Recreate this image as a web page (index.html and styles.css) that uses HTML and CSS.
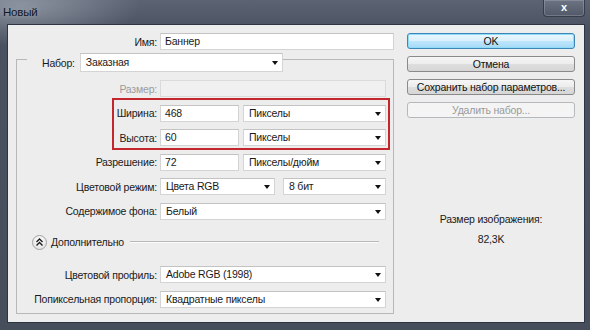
FILE: index.html
```html
<!DOCTYPE html>
<html lang="ru">
<head>
    <meta charset="UTF-8">
    <title>Новый</title>
    <link rel="stylesheet" href="styles.css">
</head>
<body>

    <div class="window">
        <div class="titlebar">
            <span class="title">Новый</span>
            <div class="close">x</div>
        </div>

        <div class="client">
            <div class="form">
                <div class="row name-row">
                    <span class="lbl">Имя:</span>
                    <div class="field input name-input">Баннер</div>
                </div>

                <fieldset class="preset">
                    <legend>
                        <span>Набор:</span>
                        <div class="field select preset-select">Заказная<i class="arrow"></i></div>
                    </legend>

                    <div class="rows">
                        <div class="row">
                            <span class="lbl disabled">Размер:</span>
                            <div class="field select full off"></div>
                        </div>

                        <div class="dims">
                            <div class="row">
                                <span class="lbl">Ширина:</span>
                                <div class="field input num">468</div>
                                <div class="field select unit">Пикселы<i class="arrow"></i></div>
                            </div>
                            <div class="row">
                                <span class="lbl">Высота:</span>
                                <div class="field input num">60</div>
                                <div class="field select unit">Пикселы<i class="arrow"></i></div>
                            </div>
                        </div>

                        <div class="row">
                            <span class="lbl">Разрешение:</span>
                            <div class="field input num">72</div>
                            <div class="field select unit">Пикселы/дюйм<i class="arrow"></i></div>
                        </div>
                        <div class="row">
                            <span class="lbl">Цветовой режим:</span>
                            <div class="field select mode">Цвета RGB<i class="arrow"></i></div>
                            <div class="field select bits">8 бит<i class="arrow"></i></div>
                        </div>
                        <div class="row">
                            <span class="lbl">Содержимое фона:</span>
                            <div class="field select full">Белый<i class="arrow"></i></div>
                        </div>

                        <div class="advanced">
                            <span class="toggle">
                                <svg width="13" height="13" viewBox="0 0 13 13">
                                    <path d="M3.5 6 L6.5 3 L9.5 6 M3.5 9.5 L6.5 6.5 L9.5 9.5" fill="none" stroke="#1a1a1a" stroke-width="1.4"/>
                                </svg>
                            </span>
                            <span>Дополнительно</span>
                            <span class="rule"></span>
                        </div>

                        <div class="row profile-row">
                            <span class="lbl">Цветовой профиль:</span>
                            <div class="field select full">Adobe RGB (1998)<i class="arrow"></i></div>
                        </div>
                        <div class="row">
                            <span class="lbl">Попиксельная пропорция:</span>
                            <div class="field select full">Квадратные пикселы<i class="arrow"></i></div>
                        </div>
                    </div>
                </fieldset>
            </div>

            <div class="side">
                <div class="btn default">OK</div>
                <div class="btn">Отмена</div>
                <div class="btn">Сохранить набор параметров...</div>
                <div class="btn off">Удалить набор...</div>

                <p class="info">Размер изображения:</p>
                <p class="info size">82,3K</p>
            </div>
        </div>
    </div>

</body>
</html>
```

FILE: styles.css
```css
body {
    margin: 0;
    font-family: "Liberation Sans", Arial, sans-serif;
    font-size: 10.5px;
    letter-spacing: -0.2px;
    color: #1a1a1a;
    background: #3d4451;
}

.window {
    width: 590px;
    height: 330px;
    display: flex;
    flex-direction: column;
    background:
        radial-gradient(ellipse 120px 40px at 20px 6px, rgba(190, 198, 210, 0.5), rgba(190, 198, 210, 0) 100%),
        linear-gradient(#5c6473, #4a5261 30px, #464e5c);
}

.titlebar {
    height: 24px;
    display: flex;
    justify-content: space-between;
    align-items: flex-start;
}

.title {
    margin: 6px 0 0 3px;
    font-size: 11.5px;
    color: #111822;
    text-shadow: 0 0 5px rgba(200, 208, 220, 0.5);
}

.close {
    width: 40px;
    height: 16px;
    margin-right: 5px;
    border: 1px solid #363c48;
    border-top: none;
    border-radius: 0 0 4px 4px;
    box-shadow: inset 0 0 0 1px rgba(255, 255, 255, 0.18);
    background: linear-gradient(#6c7483, #525a69);
    color: #fff;
    font-weight: bold;
    font-size: 11px;
    text-align: center;
    line-height: 15px;
}

.client {
    display: flex;
    margin: 0 5px 7px 7px;
    flex: 1;
    background: #ededed;
    border: 1px solid #2e3440;
}

/* левая часть с полями */
.form {
    width: 399px;
}

.row {
    display: flex;
    align-items: center;
    height: 17px;
}

.lbl {
    width: 140px;
    margin-right: 3px;
    text-align: right;
    white-space: nowrap;
}

.lbl.disabled {
    color: #9c9c9c;
}

.name-row {
    margin-top: 8px;
}

.name-row .lbl {
    width: 149px;
}

.field {
    box-sizing: border-box;
    height: 17px;
    line-height: 15px;
    background: #fff;
    border: 1px solid #d4d4d4;
    border-top-color: #c3c3c3;
    position: relative;
    white-space: nowrap;
}

.input {
    padding-left: 4px;
}

.select {
    padding-left: 5px;
}

.select.off {
    background: #f0f0f0;
    border-color: #dadada;
}

.arrow {
    position: absolute;
    right: 4px;
    top: 6px;
    border-left: 3px solid transparent;
    border-right: 3px solid transparent;
    border-top: 4px solid #111;
}

.name-input { width: 234px; }
.num { width: 79px; margin-right: 4px; }
.unit { width: 143px; }
.full { width: 226px; }
.mode { width: 115px; margin-right: 8px; }
.bits { width: 103px; }

.preset {
    margin: -3px 0 0 8px;
    padding: 0 0 5px 0;
    width: 378px;
    box-sizing: border-box;
    border: 1px solid #b8b8b8;
}

.preset legend {
    display: flex;
    align-items: center;
    gap: 5px;
    margin-left: 10px;
    padding: 6px 0 0 15px;
}

.preset-select {
    width: 203px;
    height: 19px;
    line-height: 17px;
}

.preset-select .arrow {
    top: 7px;
}

.rows {
    display: flex;
    flex-direction: column;
    gap: 7.6px;
    padding-top: 8px;
}

.dims {
    display: flex;
    flex-direction: column;
    gap: 7.6px;
    position: relative;
}

/* красная рамка поверх ширины и высоты */
.dims::after {
    content: "";
    position: absolute;
    top: -7px;
    bottom: -4px;
    left: 95px;
    right: 3px;
    border: 2px solid #c4262e;
}

.advanced {
    display: flex;
    align-items: center;
    gap: 4px;
    height: 15px;
    margin-top: 7px;
    padding: 0 14px 0 15px;
}

.toggle {
    width: 13px;
    height: 13px;
    border: 1px solid #a3a3a3;
    border-radius: 50%;
    background: radial-gradient(circle at 50% 35%, #ffffff, #dcdcdc);
    display: flex;
}

.rule {
    flex: 1;
    margin-left: 2px;
    border-top: 1px solid #b9b9b9;
    border-bottom: 1px solid #fbfbfb;
}

.profile-row {
    margin-top: 9px;
}

/* кнопки справа */
.side {
    width: 168px;
    padding-top: 8px;
    display: flex;
    flex-direction: column;
    gap: 7px;
}

.btn {
    box-sizing: border-box;
    height: 16px;
    line-height: 14px;
    text-align: center;
    border: 1px solid #8a8a8a;
    border-radius: 3px;
    background: linear-gradient(#f6f6f6, #ececec 50%, #dedede 50%, #d6d6d6);
    color: #111;
}

.btn.default {
    border-color: #3c86b8;
    background: linear-gradient(#ecf7fd, #d9f0fc 50%, #bee6fd 50%, #a7d9f5);
    box-shadow: inset 0 0 0 1px #8fdcfa;
}

.btn.off {
    border-color: #b6b9bb;
    background: #f4f4f4;
    color: #9a9a9a;
}

.info {
    margin: 0;
    text-align: center;
    line-height: 14px;
}

.info:first-of-type {
    margin-top: 87px;
}

.size {
    margin-top: -1px;
}
```
